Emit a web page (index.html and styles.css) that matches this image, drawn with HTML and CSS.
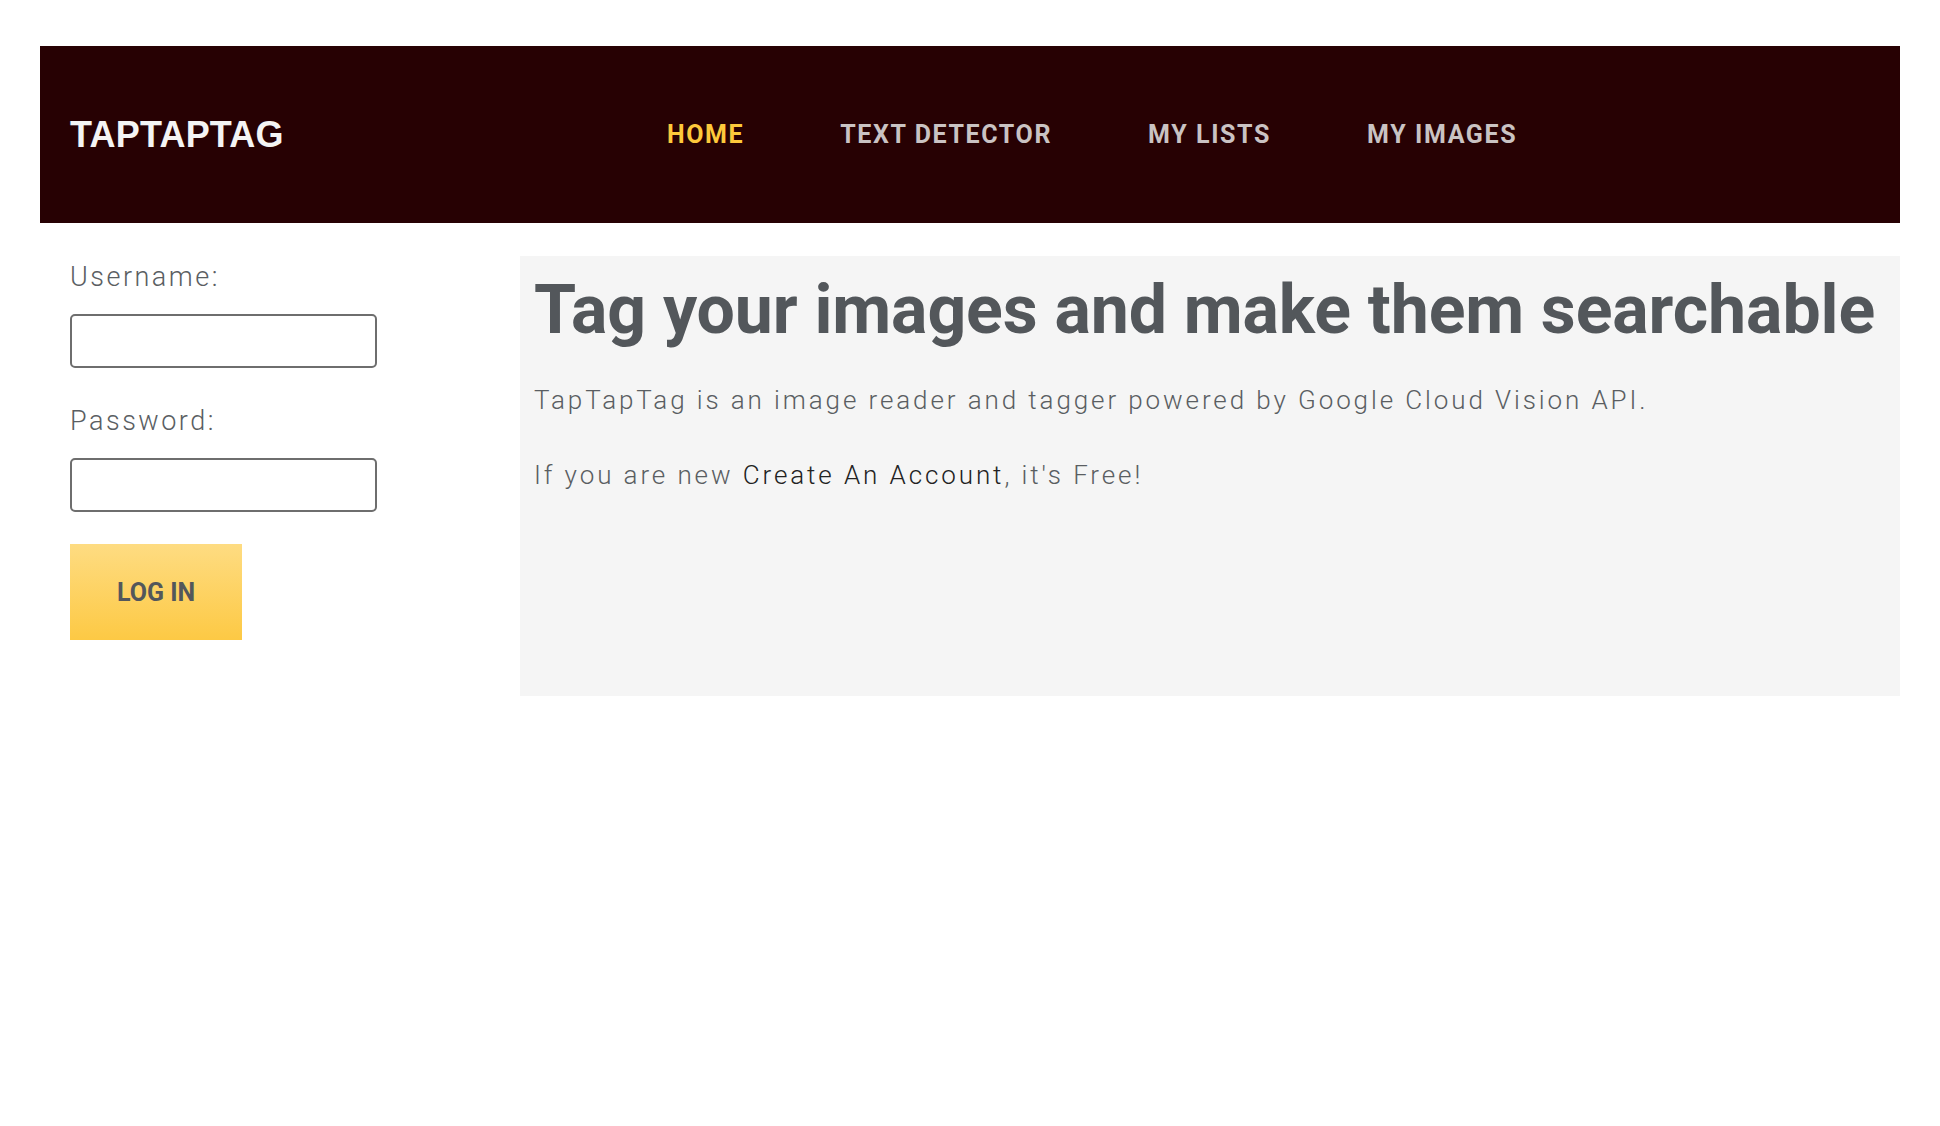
FILE: index.html
```html
<!DOCTYPE html>
<html lang="en">
<head>
<meta charset="utf-8">
<title>TapTapTag</title>
<link rel="stylesheet" href="styles.css">
</head>
<body>
<div class="page">
  <header class="topbar">
    <div class="logo">TAPTAPTAG</div>
    <nav class="nav">
      <a class="nav-link active" href="#">Home</a>
      <a class="nav-link" href="#">Text Detector</a>
      <a class="nav-link" href="#">My Lists</a>
      <a class="nav-link" href="#">My Images</a>
    </nav>
  </header>
  <div class="content">
    <form class="login">
      <label class="field-label" for="username">Username:</label>
      <input class="field-input" id="username" type="text">
      <label class="field-label second" for="password">Password:</label>
      <input class="field-input" id="password" type="password">
      <button class="login-btn" type="button">Log In</button>
    </form>
    <main class="panel">
      <h1 class="headline">Tag your images and make them searchable</h1>
      <p class="lead">TapTapTag is an image reader and tagger powered by Google Cloud Vision API.</p>
      <p class="lead second">If you are new <a class="signup" href="#">Create An Account</a>, it's Free!</p>
    </main>
  </div>
</div>
</body>
</html>
```

FILE: styles.css
```css
* { box-sizing: border-box; }
html, body { margin: 0; padding: 0; background: #ffffff; }
body { font-family: Roboto, "Noto Sans", sans-serif; }

.page {
  padding: 46px 40px 0 40px;
}

.topbar {
  height: 177px;
  background: #270103;
  display: flex;
  align-items: center;
  padding: 0 30px;
}

.logo {
  font-family: "Liberation Sans", Arial, sans-serif;
  font-weight: 700;
  font-size: 36px;
  letter-spacing: 0.2px;
  color: #f4f4f4;
  width: 597px;
  flex: none;
}

.nav {
  display: flex;
  gap: 96px;
}

.nav-link {
  font-family: Roboto, sans-serif;
  font-weight: 700;
  font-size: 25px;
  letter-spacing: 1.6px;
  text-transform: uppercase;
  text-decoration: none;
  color: #cac3c3;
}
.nav-link.active { color: #fdc93b; }

.content {
  display: flex;
  align-items: flex-start;
  margin-top: 33px;
}

.login {
  width: 480px;
  flex: none;
  padding: 5px 0 0 30px;
  display: flex;
  flex-direction: column;
  align-items: flex-start;
}

.field-label {
  font-family: Roboto, sans-serif;
  font-weight: 300;
  font-size: 27px;
  line-height: 32px;
  letter-spacing: 2.5px;
  color: #5a5e62;
}
.field-label.second { margin-top: 37px; }

.field-input {
  margin-top: 21px;
  width: 307px;
  height: 54px;
  border: 2px solid #6e6e6e;
  border-radius: 5px;
  background: #fff;
  font-size: 20px;
  padding: 0 10px;
}

.login-btn {
  margin-top: 32px;
  width: 172px;
  height: 96px;
  border: none;
  background: linear-gradient(to bottom, #fedc82, #fdc944);
  font-family: Roboto, sans-serif;
  font-weight: 700;
  font-size: 25px;
  text-transform: uppercase;
  color: #53575b;
  padding: 0;
}

.panel {
  flex: 1;
  height: 440px;
  background: #f5f5f5;
  padding: 14px 14px 0 14px;
}

.headline {
  margin: 0;
  font-family: Roboto, sans-serif;
  font-weight: 700;
  font-size: 68px;
  line-height: 80px;
  letter-spacing: -0.1px;
  color: #53575b;
}

.lead {
  margin: 35px 0 0 0;
  font-family: Roboto, sans-serif;
  font-weight: 300;
  font-size: 26px;
  line-height: 30px;
  letter-spacing: 2.9px;
  color: #5a5e62;
}
.lead.second { margin-top: 45px; }

.signup {
  color: #222222;
  font-weight: 300;
  text-decoration: none;
}
```
